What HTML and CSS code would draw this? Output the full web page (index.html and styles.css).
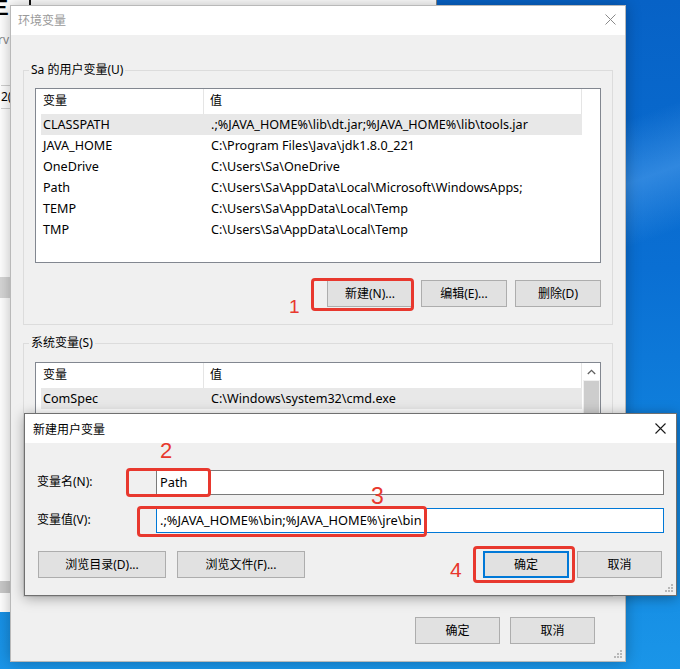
FILE: index.html
```html
<!DOCTYPE html>
<html lang="zh-CN">
<head>
<meta charset="utf-8">
<title>环境变量</title>
<link rel="stylesheet" href="styles.css">
</head>
<body>
<div class="bgwin">
  <div class="bg-top"><span class="bg-glyph">三</span><span class="bg-bar"></span></div>
  <div class="bg-rv">rv</div>
  <div class="bg-box">2(</div>
  <div class="bg-gray g-a"></div>
  <div class="bg-gray g-b"></div>
</div>

<section class="win main">
  <header class="tbar">
    <span class="ttl">环境变量</span>
    <svg class="xicon" width="11" height="11" viewBox="0 0 11 11"><path d="M0.5 0.5 L10.5 10.5 M10.5 0.5 L0.5 10.5" stroke="#8a8a8a" stroke-width="1" fill="none"/></svg>
  </header>
  <div class="mbody">
    <fieldset class="grp g1">
      <legend>Sa 的用户变量(U)</legend>
      <div class="list l1">
        <div class="lhead"><span class="h1">变量</span><span class="h2">值</span></div>
        <div class="row sel"><span class="c1">CLASSPATH</span><span class="c2">.;%JAVA_HOME%\lib\dt.jar;%JAVA_HOME%\lib\tools.jar</span></div>
        <div class="row"><span class="c1">JAVA_HOME</span><span class="c2">C:\Program Files\Java\jdk1.8.0_221</span></div>
        <div class="row"><span class="c1">OneDrive</span><span class="c2">C:\Users\Sa\OneDrive</span></div>
        <div class="row"><span class="c1">Path</span><span class="c2">C:\Users\Sa\AppData\Local\Microsoft\WindowsApps;</span></div>
        <div class="row"><span class="c1">TEMP</span><span class="c2">C:\Users\Sa\AppData\Local\Temp</span></div>
        <div class="row"><span class="c1">TMP</span><span class="c2">C:\Users\Sa\AppData\Local\Temp</span></div>
      </div>
      <div class="btns">
        <button class="btn">新建(N)...</button>
        <button class="btn">编辑(E)...</button>
        <button class="btn">删除(D)</button>
      </div>
    </fieldset>

    <fieldset class="grp g2">
      <legend>系统变量(S)</legend>
      <div class="list l2">
        <div class="lmain">
          <div class="lhead"><span class="h1">变量</span><span class="h2">值</span></div>
          <div class="row sel"><span class="c1">ComSpec</span><span class="c2">C:\Windows\system32\cmd.exe</span></div>
        </div>
        <div class="sbar">
          <div class="sarrow"><svg width="9" height="6" viewBox="0 0 9 6"><path d="M0.8 5 L4.5 1.3 L8.2 5" stroke="#606060" stroke-width="1.3" fill="none"/></svg></div>
          <div class="sthumb"></div>
        </div>
      </div>
    </fieldset>

    <div class="mfoot">
      <button class="btn b85">确定</button>
      <button class="btn b85">取消</button>
    </div>
  </div>
  <svg class="grip" width="8" height="8" viewBox="0 0 8 8"><g fill="#b8b8b8"><rect x="6" y="0" width="2" height="2"/><rect x="3" y="3" width="2" height="2"/><rect x="6" y="3" width="2" height="2"/><rect x="0" y="6" width="2" height="2"/><rect x="3" y="6" width="2" height="2"/><rect x="6" y="6" width="2" height="2"/></g></svg>
</section>

<section class="win nd">
  <header class="tbar ntbar">
    <span class="ttl nttl">新建用户变量</span>
    <svg class="xicon" width="11" height="11" viewBox="0 0 11 11"><path d="M0.5 0.5 L10.5 10.5 M10.5 0.5 L0.5 10.5" stroke="#1a1a1a" stroke-width="1.1" fill="none"/></svg>
  </header>
  <div class="ndbody">
    <div class="frow">
      <span class="flabel">变量名(N):</span>
      <div class="field">Path</div>
    </div>
    <div class="frow r2">
      <span class="flabel">变量值(V):</span>
      <div class="field focus">.;%JAVA_HOME%\bin;%JAVA_HOME%\jre\bin</div>
    </div>
    <div class="nbtns">
      <button class="btn b128">浏览目录(D)...</button>
      <button class="btn b128">浏览文件(F)...</button>
      <span class="spacer"></span>
      <button class="btn b86 def">确定</button>
      <button class="btn b85">取消</button>
    </div>
  </div>
  <svg class="grip" width="8" height="8" viewBox="0 0 8 8"><g fill="#b8b8b8"><rect x="6" y="0" width="2" height="2"/><rect x="3" y="3" width="2" height="2"/><rect x="6" y="3" width="2" height="2"/><rect x="0" y="6" width="2" height="2"/><rect x="3" y="6" width="2" height="2"/><rect x="6" y="6" width="2" height="2"/></g></svg>
</section>

<div class="ann a1"></div>
<div class="ann a2"></div>
<div class="ann a3"></div>
<div class="ann a4"></div>
<span class="num n1">1</span>
<span class="num n2">2</span>
<span class="num n3">3</span>
<span class="num n4">4</span>
</body>
</html>
```
FILE: styles.css
```css
html, body {
  margin: 0;
  padding: 0;
}
body {
  width: 680px;
  height: 669px;
  overflow: hidden;
  position: relative;
  font-family: "Noto Sans", "Noto Sans CJK SC", sans-serif;
  font-size: 12px;
  color: #000;
  background:
    linear-gradient(160deg, rgba(255,255,255,0) 38%, rgba(120,190,255,0.35) 45%, rgba(255,255,255,0) 52%),
    linear-gradient(180deg, #0762c6 0%, #0a6fd3 40%, #1287e0 75%, #1a95e8 100%);
}

/* window behind */
.bgwin {
  position: absolute;
  left: 0;
  top: 0;
  width: 436px;
  height: 612px;
  background: #fff;
  border-right: 1px solid #8a8a8a;
  display: flex;
  flex-direction: column;
  overflow: hidden;
}
.bg-top {
  height: 16px;
  display: flex;
  align-items: flex-start;
}
.bg-glyph {
  font-family: "Noto Sans CJK SC", sans-serif;
  font-size: 18px;
  line-height: 16px;
  margin-left: -9px;
  margin-top: -2px;
  font-weight: bold;
}
.bg-bar {
  width: 2px;
  height: 6px;
  background: #111;
  margin-left: 20px;
}
.bg-rv {
  margin-top: 17px;
  margin-left: -2px;
  color: #888;
  font-size: 12px;
  line-height: 14px;
}
.bg-box {
  margin-top: 38px;
  height: 22px;
  border-top: 1px solid #d0d0d0;
  border-bottom: 1px solid #d0d0d0;
  line-height: 22px;
  font-size: 12px;
  margin-left: 1px;
}
.bg-gray {
  width: 10px;
  background: #d6d6d6;
}
.g-a {
  height: 21px;
  margin-top: 168px;
}
.g-b {
  height: 12px;
  margin-top: 283px;
  background: #c9c9c9;
}

/* windows */
.win {
  position: absolute;
  box-sizing: border-box;
  background: #f0f0f0;
  display: flex;
  flex-direction: column;
}
.main {
  left: 10px;
  top: 5px;
  width: 616px;
  height: 657px;
  border: 1px solid #b9b9b9;
  box-shadow: 0 0 14px rgba(0, 0, 0, 0.28);
}
.tbar {
  flex: none;
  height: 29px;
  background: #fff;
  box-sizing: border-box;
  display: flex;
  align-items: center;
  justify-content: space-between;
  padding: 0 9px 2px 7px;
}
.ttl {
  color: #9a9a9a;
  font-family: "Noto Sans CJK SC", sans-serif;
  font-size: 12px;
  line-height: 16px;
}
.xicon {
  display: block;
}
.grip {
  position: absolute;
  right: 3px;
  bottom: 3px;
}

.mbody {
  flex: 1;
  padding: 0 12px;
  display: flex;
  flex-direction: column;
}
.grp {
  margin: 0;
  padding: 0 11px;
  border: 1px solid #dcdcdc;
  min-width: 0;
}
.grp legend {
  padding: 0 2px;
  margin-left: -6px;
  height: 16px;
  line-height: 16px;
  font-size: 12px;
}
.g1 {
  margin-top: 27px;
  padding-bottom: 17px;
}
.g2 {
  margin-top: 10px;
  padding-bottom: 22px;
}

.list {
  margin-top: 10px;
  box-sizing: border-box;
  border: 1px solid #828790;
  background: #fff;
}
.l1 {
  height: 175px;
}
.l2 {
  margin-top: 11px;
  height: 212px;
  display: flex;
}
.lmain {
  width: 546px;
}
.lhead {
  width: 546px;
  height: 25px;
  display: flex;
  box-sizing: border-box;
  border-right: 1px solid #e5e5e5;
}
.lhead span {
  line-height: 24px;
  font-size: 12px;
}
.h1 {
  width: 168px;
  box-sizing: border-box;
  padding-left: 7px;
  border-right: 1px solid #e5e5e5;
}
.h2 {
  padding-left: 6px;
}
.row {
  margin-left: 5px;
  width: 541px;
  height: 21px;
  display: flex;
  align-items: center;
  white-space: nowrap;
  font-size: 12.6px;
}
.row.sel {
  background: #e8e8e8;
}
.c1 {
  width: 170px;
  box-sizing: border-box;
  padding-left: 2px;
  line-height: 21px;
}
.c2 {
  line-height: 21px;
}
.sbar {
  width: 17px;
  margin-left: 1px;
  display: flex;
  flex-direction: column;
  background: #f0f0f0;
}
.sarrow {
  height: 17px;
  display: flex;
  align-items: center;
  justify-content: center;
  background: #fff;
}
.sthumb {
  flex: 1;
  margin: 1px 1px 0 1px;
  background: #cdcdcd;
}

.btns {
  margin-top: 17px;
  display: flex;
  justify-content: flex-end;
  gap: 8px;
}
.btn {
  width: 86px;
  height: 27px;
  box-sizing: border-box;
  border: 1px solid #adadad;
  background: #e1e1e1;
  font-family: "Noto Sans", "Noto Sans CJK SC", sans-serif;
  font-size: 12px;
  color: #000;
  padding: 0;
  line-height: 24px;
  text-align: center;
}
.b85 {
  width: 85px;
}
.b86 {
  width: 86px;
}
.b128 {
  width: 128px;
}
.mfoot {
  margin-top: 20px;
  padding-right: 18px;
  display: flex;
  justify-content: flex-end;
  gap: 10px;
}

/* new variable dialog */
.nd {
  left: 24px;
  top: 413px;
  width: 653px;
  height: 183px;
  border: 1px solid #707070;
  box-shadow: 0 2px 12px rgba(0, 0, 0, 0.35);
}
.ntbar {
  padding: 0 10px 0 8px;
}
.nttl {
  color: #000;
}
.ndbody {
  padding: 27px 12px 0 12px;
  display: flex;
  flex-direction: column;
}
.frow {
  display: flex;
  height: 25px;
  align-items: center;
}
.r2 {
  margin-top: 13px;
}
.flabel {
  width: 119px;
  flex: none;
  line-height: 16px;
  padding-bottom: 1px;
}
.field {
  flex: 1;
  height: 25px;
  box-sizing: border-box;
  border: 1px solid #7a7a7a;
  background: #fff;
  padding-left: 3px;
  line-height: 23px;
  white-space: nowrap;
  font-size: 12.8px;
}
.field.focus {
  border-color: #0078d7;
}
.nbtns {
  margin-top: 18px;
  margin-left: 1px;
  margin-right: 2px;
  display: flex;
  gap: 11px;
}
.nbtns .def {
  margin-right: -3px;
  border: 2px solid #0078d7;
  line-height: 22px;
}
.spacer {
  flex: 1;
}

/* annotations */
.ann {
  position: absolute;
  box-sizing: border-box;
  border: 3px solid #e8382e;
  border-radius: 4px;
}
.a1 { left: 311px; top: 278px; width: 103px; height: 33px; }
.a2 { left: 126px; top: 468px; width: 85px; height: 29px; }
.a3 { left: 137px; top: 506px; width: 290px; height: 31px; }
.a4 { left: 473px; top: 546px; width: 102px; height: 37px; }
.num {
  position: absolute;
  color: #e8382e;
  font-family: "Liberation Sans", sans-serif;
  line-height: 1;
}
.n1 { left: 289px; top: 297px; font-size: 19px; }
.n2 { left: 160px; top: 440px; font-size: 22px; }
.n3 { left: 371px; top: 485px; font-size: 23px; }
.n4 { left: 450px; top: 559px; font-size: 21px; }
```
